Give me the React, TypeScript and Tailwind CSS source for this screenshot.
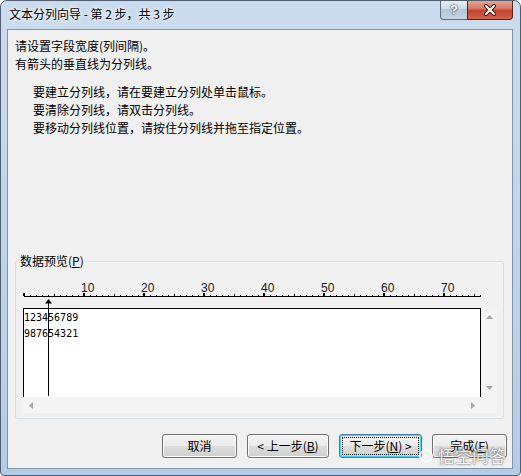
import React from "react";

const ticks = Array.from({ length: 77 }, (_, i) => i);
const labels = [10, 20, 30, 40, 50, 60, 70];

function Ruler() {
  return (
    <svg width="464" height="18" className="block ml-[4px] mt-[10px]">
      <rect x="4" y="16" width="457" height="1" fill="#000" />
      {ticks.map((i) => {
        const x = 4 + 6 * i;
        if (i % 10 === 0) return <rect key={i} x={x - 1} y={13} width={2} height={3} fill="#000" />;
        if (i % 5 === 0) return <rect key={i} x={x} y={14} width={1} height={2} fill="#000" />;
        return <rect key={i} x={x} y={15} width={1} height={1} fill="#000" />;
      })}
      {labels.map((n) => (
        <text key={n} x={4 + 6 * n - 3} y={12} fontSize="12" fontFamily="Liberation Sans, Arial, sans-serif" fill="#1a1a1a">
          {n}
        </text>
      ))}
    </svg>
  );
}

function Tri({ dir }: { dir: "up" | "down" | "left" | "right" }) {
  const pts = {
    up: "3.5,0 7,4 0,4",
    down: "0,0 7,0 3.5,4",
    left: "4,0 4,7 0,3.5",
    right: "0,0 4,3.5 0,7",
  }[dir];
  const vert = dir === "up" || dir === "down";
  return (
    <svg width={vert ? 7 : 4} height={vert ? 4 : 7} className="block">
      <polygon points={pts} fill="#a6a6a6" />
    </svg>
  );
}

function Preview() {
  return (
    <div className="relative ml-[7px] mt-[10px] w-[474px] h-[105px]">
      <div className="flex h-[89px]">
        <div className="w-[458px] h-[89px] bg-white border-t border-l border-r border-black pt-[1px] font-['DejaVu_Sans_Mono',monospace] text-[10px] leading-[16px] text-black">
          <div>123456789</div>
          <div>987654321</div>
        </div>
        <div className="w-[16px] bg-[#f4f4f4] flex flex-col items-center justify-between py-[7px]">
          <Tri dir="up" />
          <Tri dir="down" />
        </div>
      </div>
      <div className="flex h-[16px]">
        <div className="w-[458px] bg-[#f4f4f4] flex items-center justify-between px-[6px]">
          <Tri dir="left" />
          <Tri dir="right" />
        </div>
        <div className="w-[16px] bg-[#f4f4f4]" />
      </div>
      {/* split line marker */}
      <svg width="7" height="97" className="absolute left-[22px] top-[-9px]">
        <polygon points="3.5,0 7,4.5 0,4.5" fill="#000" />
        <rect x="3" y="4" width="1" height="93" fill="#000" />
      </svg>
    </div>
  );
}

const btn =
  "h-[24px] rounded-[3px] border border-[#707070] bg-[linear-gradient(#f2f2f2_0%,#ebebeb_50%,#dddddd_50%,#cfcfcf_100%)] shadow-[inset_0_0_0_1px_#fbfbfb] text-[12px] leading-none text-black flex items-center justify-center";

export default function App() {
  return (
    <div className="relative w-[521px] h-[476px] overflow-hidden rounded-t-[7px] rounded-b-[4px] border border-[#4f5f70] bg-[linear-gradient(180deg,#cbdcee_0%,#c1d6ec_40%,#b3cde9_100%)] font-['Noto_Sans_CJK_SC',sans-serif]">
      {/* title bar */}
      <div className="flex justify-between h-[28px]">
        <div className="pl-[8px] pt-[4px] text-[12px] leading-[18px] text-black [text-shadow:0_0_6px_#fff,0_0_3px_#fff]">
          文本分列向导 - 第 2 步，共 3 步
        </div>
        <div className="flex self-start mr-[7px] mt-[-1px]">
          <div className="w-[27px] h-[20px] rounded-bl-[4px] border border-t-0 border-r-0 border-[#5d6c7d] bg-[linear-gradient(#e7eef5_0%,#cfdbe7_50%,#b4c4d4_50%,#c8d5e2_100%)] flex items-center justify-center">
            <span className="font-['Liberation_Sans',sans-serif] font-bold text-[13px] leading-none text-white [text-shadow:0_0_1px_#2c3e50,0_0_2px_#2c3e50]">?</span>
          </div>
          <div className="w-[46px] h-[20px] rounded-br-[4px] border border-t-0 border-[#5a2418] bg-[linear-gradient(#e9a99b_0%,#d47866_45%,#c2452f_55%,#d2614b_100%)] flex items-center justify-center">
            <svg width="14" height="12" viewBox="0 0 14 12">
              <path d="M3 2 L11 10 M11 2 L3 10" stroke="#4a1a12" strokeWidth="4" strokeLinecap="round" />
              <path d="M3 2 L11 10 M11 2 L3 10" stroke="#fff" strokeWidth="2" strokeLinecap="round" />
            </svg>
          </div>
        </div>
      </div>

      {/* client area */}
      <div className="ml-[6px] w-[506px] h-[440px] border border-[#8394a8] bg-[#f0f0f0] flex flex-col text-[12px] leading-[18px] text-black">
        <div className="pl-[7px] pt-[7px]">
          <p>请设置字段宽度(列间隔)。</p>
          <p>有箭头的垂直线为分列线。</p>
          <div className="pl-[18px] mt-[10px]">
            <p>要建立分列线，请在要建立分列处单击鼠标。</p>
            <p>要清除分列线，请双击分列线。</p>
            <p>要移动分列线位置，请按住分列线并拖至指定位置。</p>
          </div>
        </div>

        <fieldset className="mx-[7px] mt-[115px] w-[489px] h-[167px] border border-[#d5dfe5] rounded-[3px]">
          <legend className="ml-[2px] px-[2px] leading-[18px]">
            数据预览(<span className="underline">P</span>)
          </legend>
          <Ruler />
          <Preview />
        </fieldset>

        <div className="flex gap-[10px] pl-[154px] mt-[15px]">
          <button className={`${btn} w-[75px]`}>取消</button>
          <button className={`${btn} w-[82px]`}>
            &lt; 上一步(<span className="underline">B</span>)
          </button>
          <button className="h-[24px] w-[83px] rounded-[3px] border border-[#3c7fb1] bg-[linear-gradient(#f2f2f2_0%,#ebebeb_50%,#dddddd_50%,#cfcfcf_100%)] shadow-[inset_0_0_0_1px_#48d0f8] p-[2px] text-[12px] leading-none text-black">
            <span className="flex h-full w-full items-center justify-center border border-dotted border-black">
              下一步(<span className="underline">N</span>) &gt;
            </span>
          </button>
          <button className={`${btn} w-[75px]`}>
            完成(<span className="underline">F</span>)
          </button>
        </div>
      </div>

      {/* watermark */}
      <div className="absolute left-[416px] top-[445px] flex items-center gap-[3px] opacity-80">
        <svg width="18" height="16" viewBox="0 0 18 16">
          <circle cx="9" cy="8" r="6" fill="none" stroke="#fff" strokeWidth="2" />
          <circle cx="9" cy="8" r="2" fill="#fff" />
        </svg>
        <span className="text-[17px] leading-[20px] text-white [text-shadow:0_0_2px_#555,0_0_1px_#333]">悟空问答</span>
      </div>
    </div>
  );
}
